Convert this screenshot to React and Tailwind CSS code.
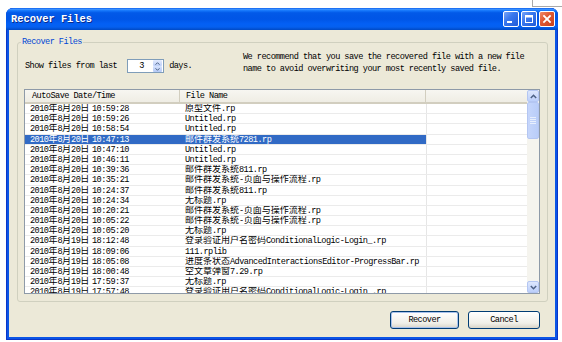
import React from "react";

const CJK = /([\u3000-\u303f\u4e00-\u9fff\uff00-\uffef]+)/;

function T({ s }) {
  return s.split(CJK).map((p, i) =>
    /[\u3000-\u303f\u4e00-\u9fff\uff00-\uffef]/.test(p) ? (
      <span key={i} className="text-[9px] tracking-normal">
        {p}
      </span>
    ) : (
      <React.Fragment key={i}>{p}</React.Fragment>
    )
  );
}

const rows = [
  ["2010年8月20日", "10:59:28", "原型文件.rp"],
  ["2010年8月20日", "10:59:26", "Untitled.rp"],
  ["2010年8月20日", "10:58:54", "Untitled.rp"],
  ["2010年8月20日", "10:47:13", "邮件群发系统7281.rp", true],
  ["2010年8月20日", "10:47:10", "Untitled.rp"],
  ["2010年8月20日", "10:46:11", "Untitled.rp"],
  ["2010年8月20日", "10:39:36", "邮件群发系统811.rp"],
  ["2010年8月20日", "10:35:21", "邮件群发系统-页面与操作流程.rp"],
  ["2010年8月20日", "10:24:37", "邮件群发系统811.rp"],
  ["2010年8月20日", "10:24:34", "无标题.rp"],
  ["2010年8月20日", "10:20:21", "邮件群发系统-页面与操作流程.rp"],
  ["2010年8月20日", "10:05:22", "邮件群发系统-页面与操作流程.rp"],
  ["2010年8月20日", "10:05:20", "无标题.rp"],
  ["2010年8月19日", "18:12:48", "登录验证用户名密码ConditionalLogic-Login_.rp"],
  ["2010年8月19日", "18:09:06", "111.rplib"],
  ["2010年8月19日", "18:05:08", "进度条状态AdvancedInteractionsEditor-ProgressBar.rp"],
  ["2010年8月19日", "18:00:48", "空文章弹窗7.29.rp"],
  ["2010年8月19日", "17:59:37", "无标题.rp"],
  ["2010年8月19日", "17:57:48", "登录验证用户名密码ConditionalLogic-Login_.rp"],
];

function TitleButton({ kind }) {
  const isClose = kind === "close";
  return (
    <div
      className={
        isClose
          ? "w-[16px] h-[16px] rounded-[2px] border border-white bg-[linear-gradient(135deg,#f08a6a_0%,#e05a35_40%,#c8401c_100%)] flex items-center justify-center"
          : "w-[16px] h-[16px] rounded-[2px] border border-white bg-[linear-gradient(135deg,#7aa6f8_0%,#3a78ee_40%,#1f5ad8_100%)] flex items-center justify-center"
      }
    >
      <svg width="14" height="14" viewBox="0 0 14 14">
        {kind === "min" && <rect x="3" y="9" width="5" height="2" fill="white" />}
        {kind === "max" && (
          <g fill="none" stroke="white">
            <rect x="3.5" y="3.5" width="7" height="7" />
            <line x1="3" y1="4.5" x2="11" y2="4.5" strokeWidth="2" />
          </g>
        )}
        {kind === "close" && (
          <g stroke="white" strokeWidth="1.8" strokeLinecap="square">
            <line x1="4" y1="4" x2="10" y2="10" />
            <line x1="10" y1="4" x2="4" y2="10" />
          </g>
        )}
      </svg>
    </div>
  );
}

function ScrollArrow({ up }) {
  return (
    <div className="h-[12px] w-full rounded-[2px] border border-[#b4c6f2] bg-[linear-gradient(to_bottom,#dde7fd,#bccffa)] flex items-center justify-center">
      <svg width="7" height="5" viewBox="0 0 7 5">
        <polyline
          points={up ? "0.8,4 3.5,1.3 6.2,4" : "0.8,1 3.5,3.7 6.2,1"}
          fill="none"
          stroke="#4d6185"
          strokeWidth="1.5"
        />
      </svg>
    </div>
  );
}

export default function App() {
  return (
    <div className="relative w-[562px] h-[342px] bg-white overflow-hidden pt-[8px] pl-[6px] font-['Liberation_Mono','Noto_Sans_CJK_SC',monospace] text-[8.6px] tracking-[-0.55px] text-black">
      <div className="absolute left-[532px] top-0 w-[30px] h-[7px] border-l border-b border-[#a9a9a9]" />
      <div className="w-[552px] h-[332px] flex flex-col rounded-t-[7px] overflow-hidden bg-[#0b55e6] shadow-[inset_0_0_0_1px_#0a35c8]">
        {/* title bar */}
        <div className="h-[22px] shrink-0 flex items-center pl-[5px] pr-[3px] bg-[linear-gradient(to_bottom,#0a5ded_0%,#3d93ff_6%,#1476fb_12%,#0259e8_22%,#0055e6_50%,#0360f5_72%,#0560f0_86%,#0049c4_100%)]">
          <span className="text-white font-bold text-[10.4px] tracking-normal leading-none [text-shadow:1px_1px_0_#0a2a8a]">
            Recover Files
          </span>
          <div className="ml-auto flex items-center gap-[2px]">
            <TitleButton kind="min" />
            <TitleButton kind="max" />
            <TitleButton kind="close" />
          </div>
        </div>

        {/* client */}
        <div className="flex-1 mx-[3px] mb-[3px] bg-[#ECE9D8] flex flex-col pt-[6px]">
          <fieldset className="ml-[8px] mr-[7px] border border-[#D0D0BF] rounded-[3px] p-0 m-0 min-w-0">
            <legend className="ml-[3px] px-[1px] leading-[12px] text-[#0046D5]">Recover Files</legend>
            <div className="pl-[6px] pr-[7px] pb-[7px]">
              <div className="mt-[3px] flex items-start">
                <div className="w-[219px] pl-[1px] mt-[8px] h-[14px] flex items-center">
                  <span>Show files from last</span>
                  <div className="ml-[10px] w-[37px] h-[14px] border border-[#7F9DB9] bg-white flex items-center">
                    <span className="ml-[11px] flex-1">3</span>
                    <div className="w-[9px] h-[12px] mr-[1px] flex flex-col">
                      <div className="h-[6px] rounded-[1px] bg-[linear-gradient(to_bottom,#e3ebfd,#bdd0f8)] flex items-center justify-center">
                        <svg width="5" height="3" viewBox="0 0 5 3">
                          <polyline points="0.5,2.7 2.5,0.7 4.5,2.7" fill="none" stroke="#4d6185" strokeWidth="1" />
                        </svg>
                      </div>
                      <div className="h-[6px] rounded-[1px] bg-[linear-gradient(to_bottom,#d6e2fc,#b4c9f6)] flex items-center justify-center">
                        <svg width="5" height="3" viewBox="0 0 5 3">
                          <polyline points="0.5,0.3 2.5,2.3 4.5,0.3" fill="none" stroke="#4d6185" strokeWidth="1" />
                        </svg>
                      </div>
                    </div>
                  </div>
                  <span className="ml-[5px]">days.</span>
                </div>
                <div className="leading-[12px] whitespace-nowrap">
                  We recommend that you save the recovered file with a new file
                  <br />
                  name to avoid overwriting your most recently saved file.
                </div>
              </div>

              {/* list */}
              <div className="mt-[14px] h-[205px] border border-[#8e9aa8] bg-white flex overflow-hidden">
                <div className="flex-1 flex flex-col overflow-hidden">
                  <div className="h-[14px] shrink-0 flex bg-[linear-gradient(to_bottom,#f7f6f1,#efede4)] border-b-2 border-[#d2cebf] leading-[12px]">
                    <div className="w-[155px] pl-[7px] border-r border-[#d2cebf]">AutoSave Date/Time</div>
                    <div className="w-[246px] pl-[6px] border-r border-[#d2cebf]">File Name</div>
                    <div className="flex-1" />
                  </div>
                  {rows.map(([d, t, n, sel], i) => (
                    <div key={i} className="h-[10.2px] shrink-0 flex border-b border-[#ebebeb] leading-[10px] whitespace-nowrap overflow-hidden">
                      <div className={sel ? "w-[401px] flex bg-[#316AC5] text-white" : "w-[401px] flex"}>
                        <div className="w-[155px] pl-[5px]">
                          <span className="inline-block w-[62px]">
                            <T s={d} />
                          </span>
                          <span>{t}</span>
                        </div>
                        <div className="w-[246px] pl-[5px]">
                          <T s={n} />
                        </div>
                      </div>
                      <div className="flex-1 border-l border-[#e6e6e6]" />
                    </div>
                  ))}
                </div>
                <div className="w-[12px] shrink-0 flex flex-col bg-[#f5f4ee]">
                  <ScrollArrow up />
                  <div className="h-[37px] rounded-[2px] border border-[#b4c6f2] bg-[linear-gradient(to_right,#c6d6fb,#b9cdf9)] flex items-center justify-center">
                    <svg width="6" height="7" viewBox="0 0 6 7">
                      <g stroke="#e8effd" strokeWidth="1">
                        <line x1="0" y1="0.5" x2="6" y2="0.5" />
                        <line x1="0" y1="2.5" x2="6" y2="2.5" />
                        <line x1="0" y1="4.5" x2="6" y2="4.5" />
                        <line x1="0" y1="6.5" x2="6" y2="6.5" />
                      </g>
                    </svg>
                  </div>
                  <div className="flex-1" />
                  <ScrollArrow />
                </div>
              </div>
            </div>
          </fieldset>

          <div className="mt-[9px] flex justify-end gap-[9px] pr-[15px]">
            <button className="w-[69px] h-[18px] rounded-[3px] border border-[#003C74] bg-[linear-gradient(to_bottom,#ffffff,#f0efe8_70%,#d8d4c8)] shadow-[inset_0_0_0_1px_#a9c2ec]">
              Recover
            </button>
            <button className="w-[72px] h-[18px] rounded-[3px] border border-[#003C74] bg-[linear-gradient(to_bottom,#ffffff,#f0efe8_70%,#d8d4c8)]">
              Cancel
            </button>
          </div>
        </div>
      </div>
    </div>
  );
}
